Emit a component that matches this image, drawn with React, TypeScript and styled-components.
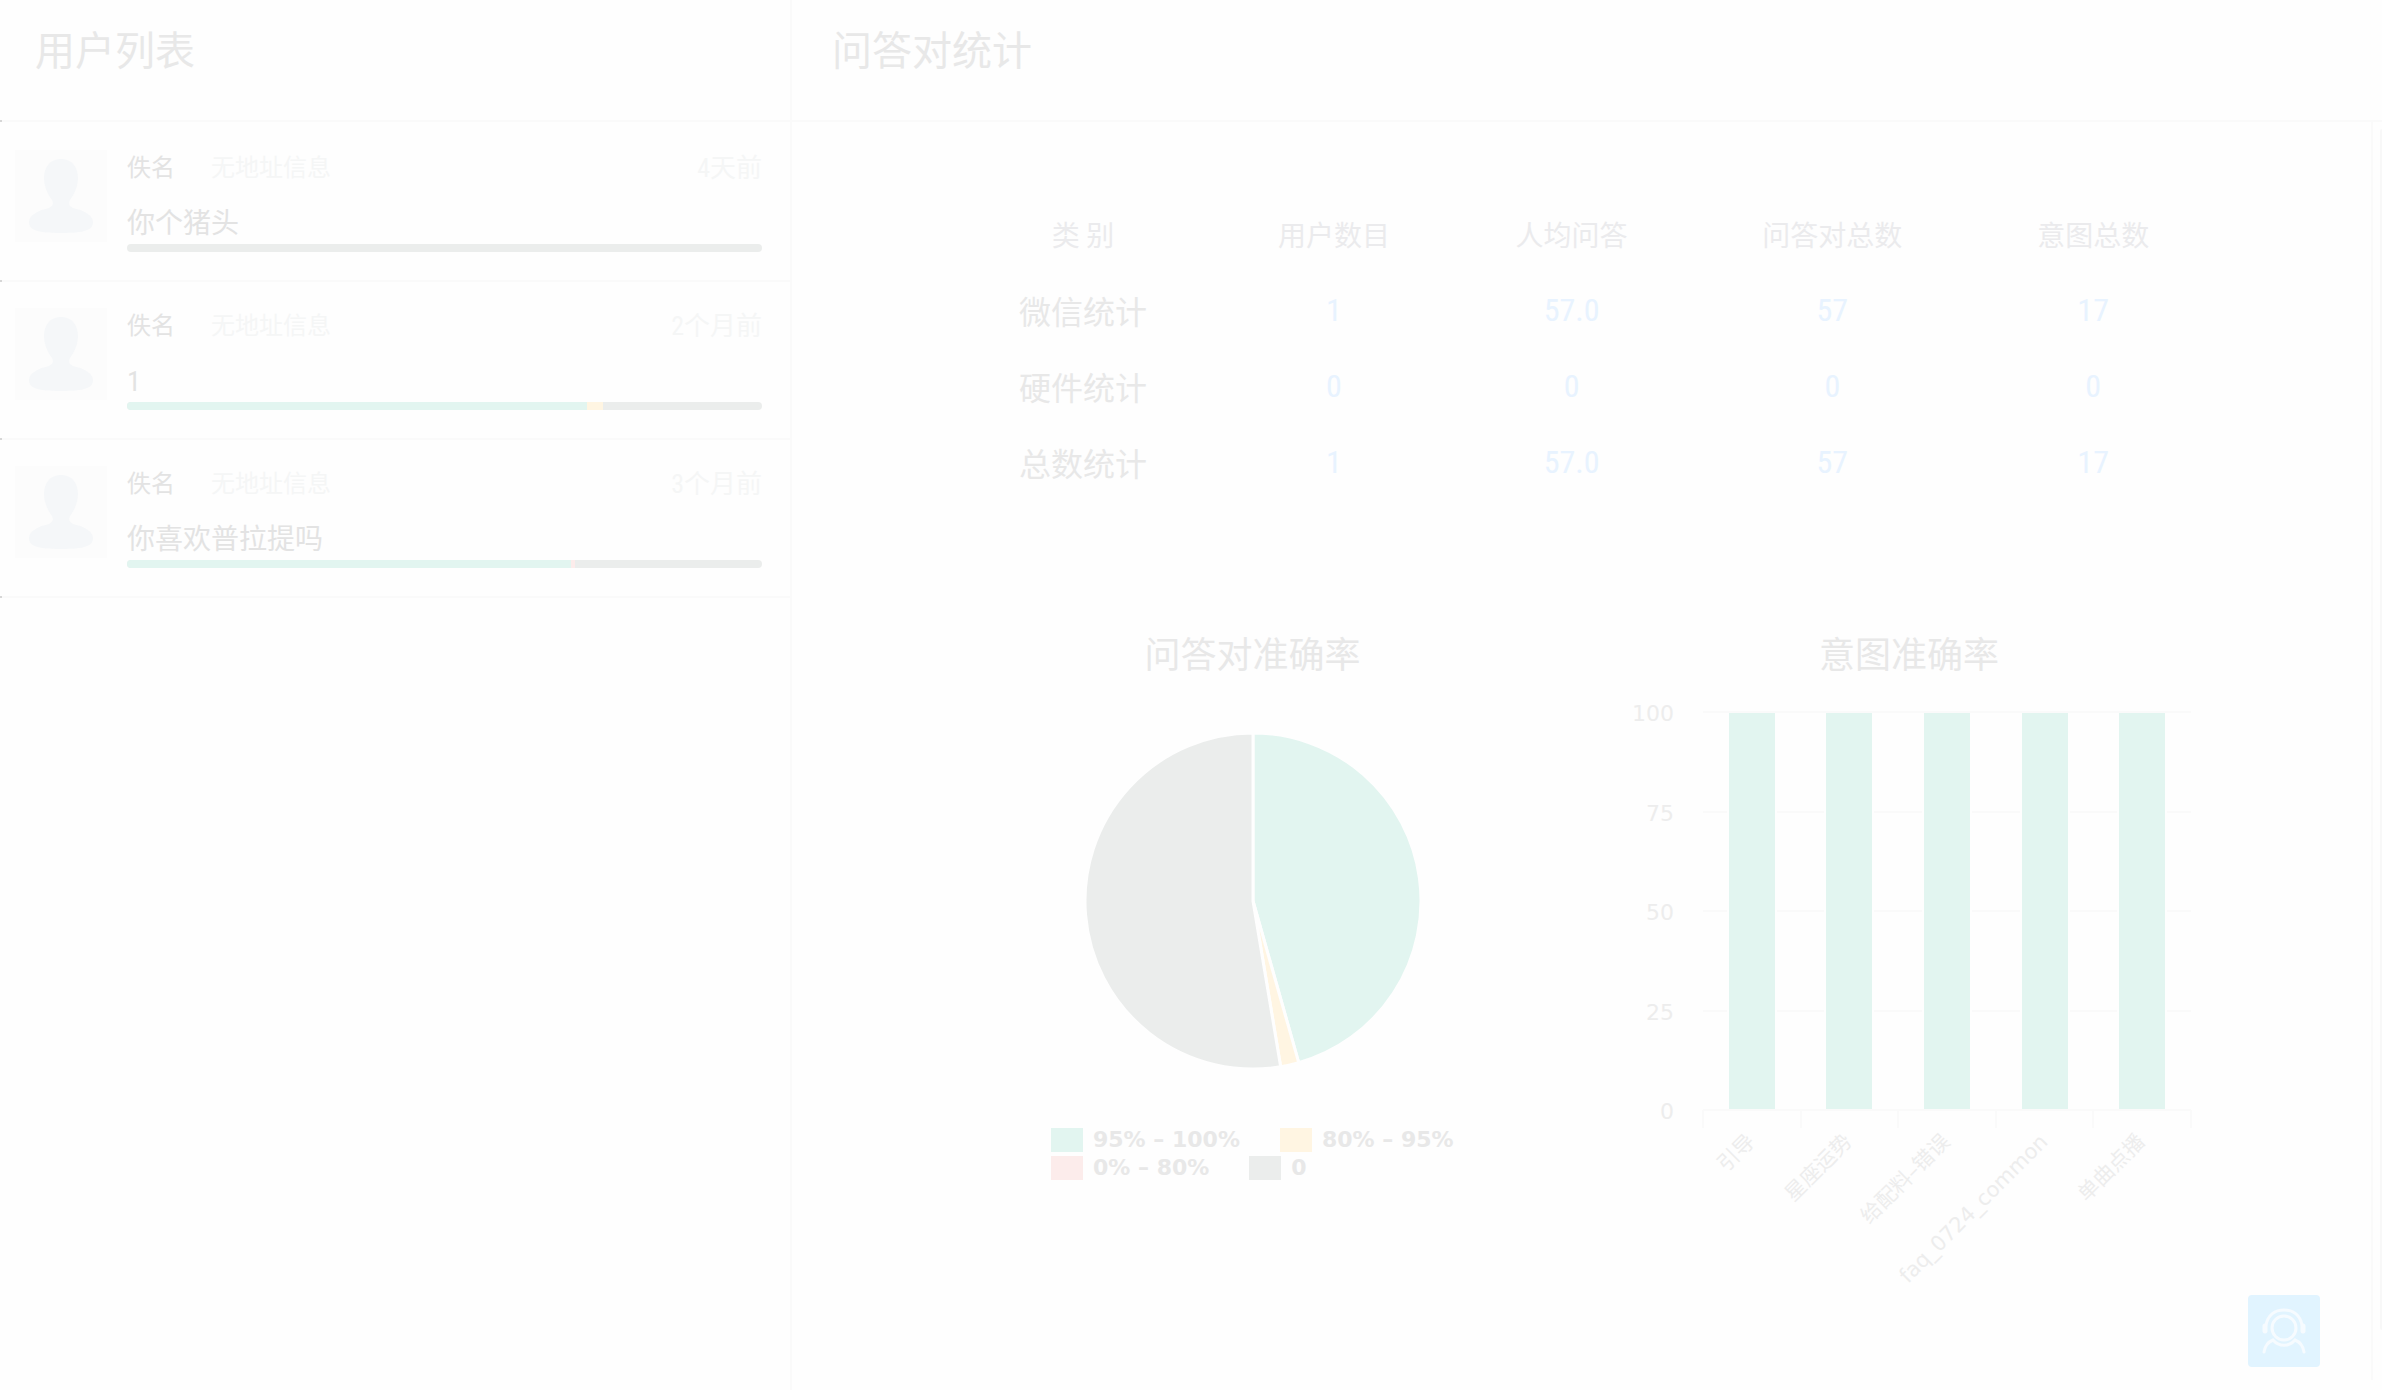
import React from 'react';
import styled, { createGlobalStyle } from 'styled-components';

const color = {
  page: '#fefefe',
  line: '#fafafa',
  heading: '#e8e8e8',
  text: '#e3e3e3',
  muted: '#f5f6f6',
  link: '#e8f3ff',
  green: '#e2f5f0',
  yellow: '#fff5e2',
  red: '#fceceb',
  grey: '#ebedec',
};

const GlobalStyle = createGlobalStyle`
  * { box-sizing: border-box; }
  body {
    margin: 0;
    background: ${color.page};
    color: ${color.heading};
    font-family: "Roboto Condensed", "Noto Sans CJK SC", sans-serif;
  }
  h1, h2, p, ul { margin: 0; padding: 0; font-weight: 400; }
  ul { list-style: none; }
`;

const Page = styled.div`
  display: grid;
  grid-template-columns: 33.25% 1fr;
  min-height: 100vh;
`;

const Sidebar = styled.aside`
  border-right: 2px solid ${color.line};
`;

const Header = styled.header<{ $indent: number }>`
  height: 120px;
  padding: 22px 0 0 ${p => p.$indent}px;
`;

const Title = styled.h1`
  font-size: 40px;
  line-height: 60px;
`;

const Rule = styled.div<{ $marked?: boolean }>`
  height: 2px;
  background: ${p => (p.$marked ? `linear-gradient(to right, #d6d6d6 2px, ${color.line} 2px)` : color.line)};
`;

const UserList = styled.ul`
  padding-top: 2px;
`;

const UserRow = styled.div`
  display: flex;
  gap: 20px;
  height: 156px;
  padding: 26px 28px 0 15px;
`;

const Avatar = styled.svg`
  flex: none;
  width: 92px;
  height: 92px;
  background: #fcfcfc;
`;

const UserBody = styled.div`
  flex: 1;
  min-width: 0;
`;

const UserMeta = styled.div`
  display: flex;
  align-items: center;
  height: 36px;
  font-size: 24px;
  line-height: 36px;
`;

const UserName = styled.span`
  color: ${color.text};
`;

const Address = styled.span`
  flex: 1;
  margin-left: 36px;
  color: ${color.muted};
`;

const Time = styled.time`
  font-size: 26px;
  color: ${color.muted};
`;

const Message = styled.p`
  margin-top: 18px;
  font-size: 28px;
  line-height: 40px;
  color: ${color.text};
`;

const Meter = styled.div`
  display: flex;
  height: 8px;
  border-radius: 4px;
  overflow: hidden;
  background: ${color.grey};
`;

const MeterPart = styled.span<{ $fill: string }>`
  background: ${p => p.$fill};
`;

const Main = styled.main`
  display: flex;
  flex-direction: column;
  min-width: 0;
  padding-bottom: 10px;
`;

const Scroller = styled.div`
  display: flex;
  flex: 1;
`;

const Content = styled.div`
  flex: 1;
  padding: 74px 10% 0;
`;

const Track = styled.div`
  display: flex;
  justify-content: flex-end;
  width: 11px;
  padding: 7px 0 50px;
  border-left: 2px solid ${color.line};
`;

const Thumb = styled.div`
  width: 2px;
  border-radius: 2px 0 0 2px;
  background: #f8f8f8;
`;

const StatsTable = styled.table`
  width: 100%;
  border-collapse: collapse;
  text-align: center;

  th, td { height: 76px; padding: 0 16px; font-weight: 400; }
  thead th { font-size: 28px; color: #ebebed; }
  tbody th { font-size: 32px; color: ${color.heading}; }
  td { font-size: 32px; color: ${color.link}; }
`;

const Charts = styled.div`
  display: grid;
  grid-template-columns: 1fr 1fr;
  gap: 52px;
  margin-top: 136px;
`;

const ChartCard = styled.section`
  display: flex;
  flex-direction: column;
  align-items: center;
`;

const ChartTitle = styled.h2`
  font-size: 36px;
  line-height: 40px;
`;

const Pie = styled.svg`
  width: 336px;
  height: 336px;
  margin: 57px 0;
`;

const Legend = styled.ul`
  display: flex;
  flex-wrap: wrap;
  column-gap: 40px;
  align-self: stretch;
  padding: 0 50px 0 100px;
  font: 700 22px/28px "DejaVu Sans", sans-serif;
`;

const LegendItem = styled.li`
  display: flex;
  align-items: center;
  gap: 10px;
`;

const Swatch = styled.span<{ $fill: string }>`
  width: 32px;
  height: 24px;
  background: ${p => p.$fill};
`;

const BarSvg = styled.svg`
  width: 606px;
  height: 620px;
  overflow: visible;
`;

const AxisText = styled.text`
  font-family: "DejaVu Sans", "Noto Sans CJK SC", sans-serif;
  font-size: 22px;
  fill: #ededed;
`;

const CategoryText = styled(AxisText)`
  font-size: 21px;
`;

const Support = styled.button`
  position: fixed;
  right: 62px;
  bottom: 23px;
  width: 72px;
  height: 72px;
  padding: 0;
  border: 0;
  border-radius: 4px;
  background: #e1f4ff;
`;

const users = [
  { time: '4天前', message: '你个猪头', parts: [] },
  { time: '2个月前', message: '1', parts: [[72.4, color.green], [2.6, color.yellow]] },
  { time: '3个月前', message: '你喜欢普拉提吗', parts: [[69.9, color.green], [0.6, color.red]] },
] as { time: string; message: string; parts: [number, string][] }[];

const columns = ['类 别', '用户数目', '人均问答', '问答对总数', '意图总数'];

const stats = [
  ['微信统计', '1', '57.0', '57', '17'],
  ['硬件统计', '0', '0', '0', '0'],
  ['总数统计', '1', '57.0', '57', '17'],
];

const slices = [
  { label: '95% – 100%', count: 26, fill: color.green },
  { label: '80% – 95%', count: 1, fill: color.yellow },
  { label: '0% – 80%', count: 0, fill: color.red },
  { label: '0', count: 30, fill: color.grey },
];

const intents = ['引导', '星座运势', '给配料–错误', 'faq_0724_common', '单曲点播'];

function PieChart() {
  const total = slices.reduce((sum, s) => sum + s.count, 0);
  const at = (n: number) => {
    const angle = (n / total) * Math.PI * 2;
    return `${168 + 168 * Math.sin(angle)} ${168 - 168 * Math.cos(angle)}`;
  };
  let start = 0;
  return (
    <Pie viewBox="0 0 336 336" role="img" aria-label="问答对准确率">
      {slices.filter(s => s.count > 0).map(s => {
        const from = start;
        start += s.count;
        const large = s.count / total > 0.5 ? 1 : 0;
        return (
          <path
            key={s.label}
            d={`M168 168L${at(from)}A168 168 0 ${large} 1 ${at(start)}Z`}
            fill={s.fill}
            stroke={color.page}
            strokeWidth="3"
          />
        );
      })}
    </Pie>
  );
}

function BarChart() {
  const left = 97;
  const right = 585;
  const top = 36;
  const bottom = 434;
  const step = (right - left) / intents.length;
  return (
    <BarSvg viewBox="0 0 606 620" role="img" aria-label="意图准确率">
      {[100, 75, 50, 25, 0].map(v => {
        const y = bottom - ((bottom - top) * v) / 100;
        return (
          <g key={v}>
            <path d={`M${left} ${Math.round(y)}H${right}`} stroke={color.line} strokeWidth="2" />
            <AxisText x={left - 29} y={y + 9} textAnchor="end">{v}</AxisText>
          </g>
        );
      })}
      {[0, 1, 2, 3, 4, 5].map(i => (
        <path key={i} d={`M${Math.round(left + i * step)} ${bottom}v18`} stroke={color.line} strokeWidth="2" />
      ))}
      {intents.map((name, i) => {
        const x = Math.round(left + i * step + step / 2);
        return (
          <g key={name}>
            <rect x={x - 25} y={top + 1} width="50" height={bottom - top - 2} fill={color.page} />
            <rect x={x - 23} y={top + 1} width="46" height={bottom - top - 2} fill={color.green} />
            <CategoryText transform={`translate(${x + 4} 467) rotate(-45)`} textAnchor="end">{name}</CategoryText>
          </g>
        );
      })}
    </BarSvg>
  );
}

export default function App() {
  return (
    <>
      <GlobalStyle />
      <Page>
        <Sidebar>
          <Header $indent={35}><Title>用户列表</Title></Header>
          <Rule $marked />
          <UserList>
            {users.map(u => (
              <li key={u.time}>
                <UserRow>
                  <Avatar viewBox="0 0 92 92" aria-hidden="true">
                    <path
                      fill="#f5f7f9"
                      d="M46 9C35 9 29 17 29 28c0 10 5 18 8 22 2 5 0 6-3 8C24 60 14 65 14 72c0 8 8 11 32 11s32-3 32-11c0-7-10-12-20-14-3-2-5-3-3-8 3-4 8-12 8-22C63 17 57 9 46 9z"
                    />
                  </Avatar>
                  <UserBody>
                    <UserMeta>
                      <UserName>佚名</UserName>
                      <Address>无地址信息</Address>
                      <Time>{u.time}</Time>
                    </UserMeta>
                    <Message>{u.message}</Message>
                    <Meter>
                      {u.parts.map(([share, fill]) => (
                        <MeterPart key={fill} $fill={fill} style={{ width: `${share}%` }} />
                      ))}
                    </Meter>
                  </UserBody>
                </UserRow>
                <Rule $marked />
              </li>
            ))}
          </UserList>
        </Sidebar>
        <Main>
          <Header $indent={40}><Title>问答对统计</Title></Header>
          <Rule />
          <Scroller>
            <Content>
              <StatsTable>
                <thead>
                  <tr>{columns.map(c => <th key={c} scope="col">{c}</th>)}</tr>
                </thead>
                <tbody>
                  {stats.map(([name, ...values]) => (
                    <tr key={name}>
                      <th scope="row">{name}</th>
                      {values.map((v, i) => <td key={i}>{v}</td>)}
                    </tr>
                  ))}
                </tbody>
              </StatsTable>
              <Charts>
                <ChartCard>
                  <ChartTitle>问答对准确率</ChartTitle>
                  <PieChart />
                  <Legend>
                    {slices.map(s => (
                      <LegendItem key={s.label}><Swatch $fill={s.fill} />{s.label}</LegendItem>
                    ))}
                  </Legend>
                </ChartCard>
                <ChartCard>
                  <ChartTitle>意图准确率</ChartTitle>
                  <BarChart />
                </ChartCard>
              </Charts>
            </Content>
            <Track><Thumb /></Track>
          </Scroller>
        </Main>
      </Page>
      <Support aria-label="在线客服">
        <svg width="72" height="72" viewBox="0 0 72 72" fill="none" stroke="#f6fbff" strokeWidth="3" strokeLinecap="round" aria-hidden="true">
          <circle cx="36" cy="33" r="12" />
          <path d="M18 30C20 20 27 15 36 15s16 5 18 15" />
          <path d="M17 31v5M55 31v5" strokeWidth="5" />
          <path d="M16 57c1-6 4-10 9-12 6 7 16 7 22 0 5 2 8 6 9 12" />
        </svg>
      </Support>
    </>
  );
}
